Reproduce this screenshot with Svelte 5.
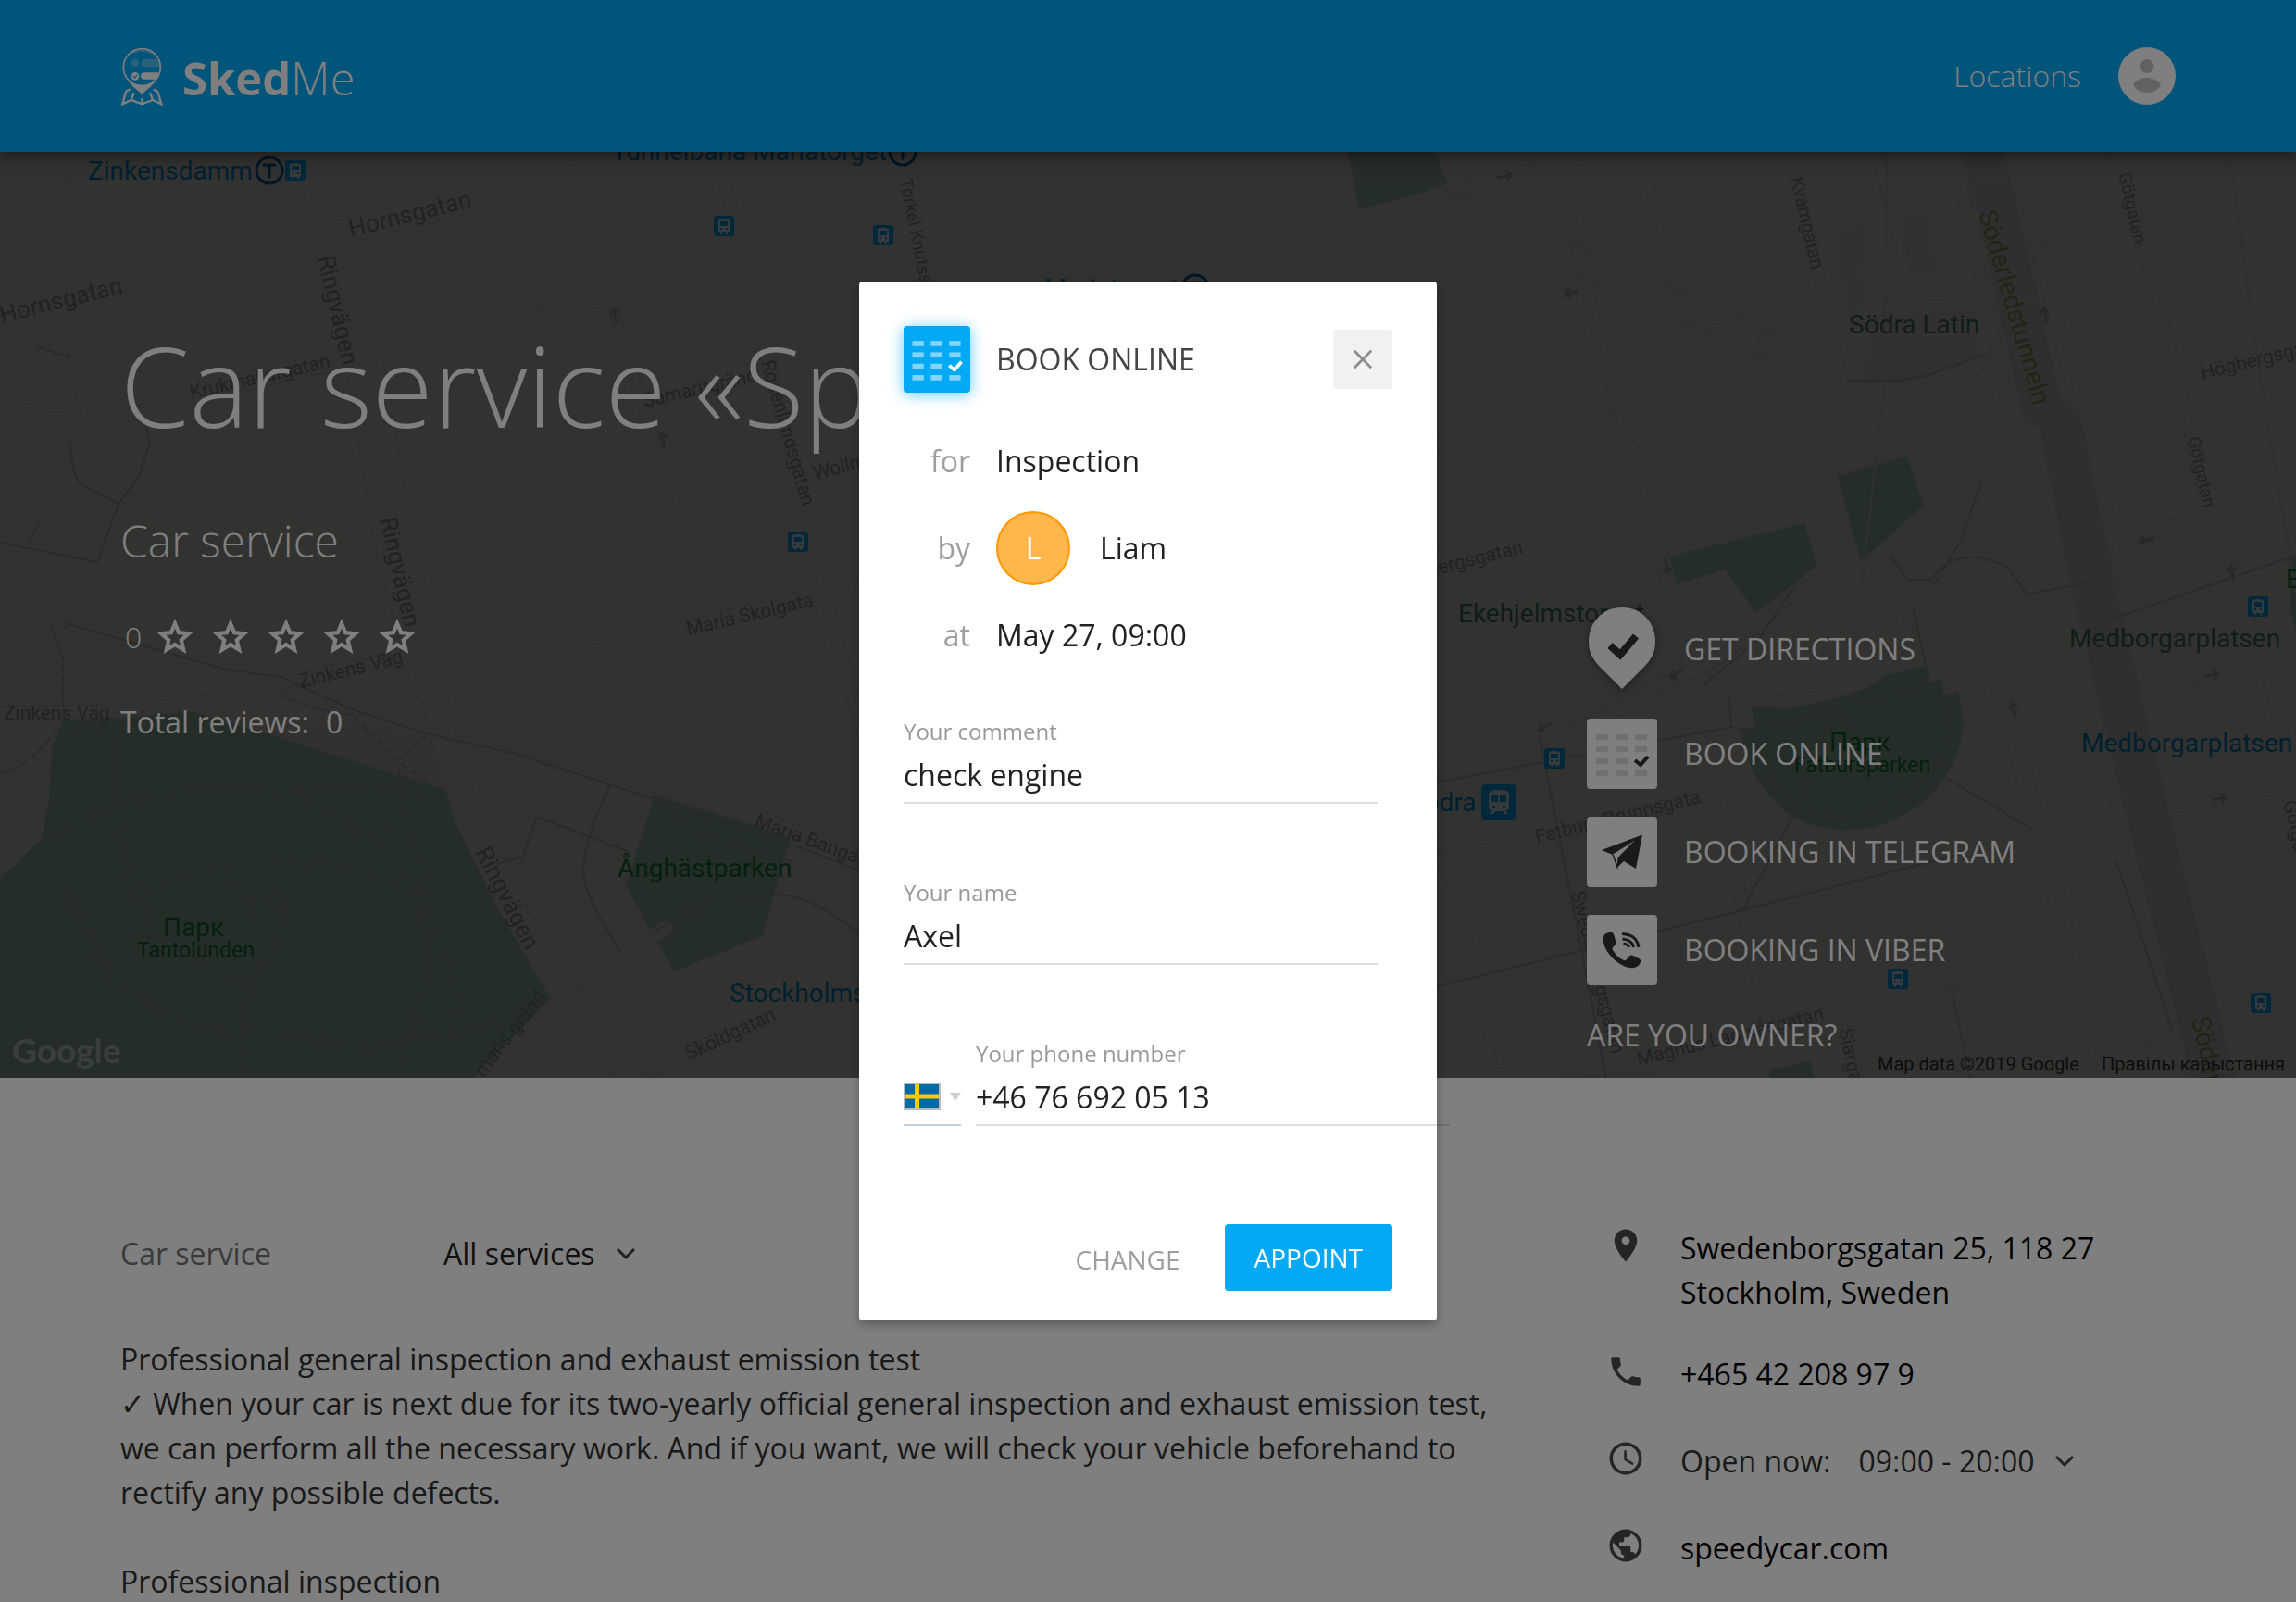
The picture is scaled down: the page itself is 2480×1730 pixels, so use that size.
<script>
  let comment = $state('check engine');
  let name = $state('Axel');
  let phone = $state('+46 76 692 05 13');
  let service = $state('All services');

  const cells = [0, 1, 2, 3].flatMap((r) => [0, 1, 2].map((c) => ({ r, c })));
  const ratings = [1, 2, 3, 4, 5];

  const roads = [
    { w: 24, d: 'M0 329L332 259L712 170L740 160' },
    { w: 6, d: 'M0 222L196 160' },
    { w: 12, d: 'M320 160L344 244' },
    { w: 26, d: 'M344 244L385 370L409 481' },
    { w: 40, d: 'M393 385L409 481L424 580L463 735' },
    { w: 26, d: 'M450 690L463 735L481 801L505 883L547 969L606 1070L683 1170' },
    { w: 12, d: 'M391 388L415 374L680 318L930 248' },
    { w: 12, d: 'M0 514L95 459L267 414L391 388' },
    { w: 10, d: 'M0 444L89 437' },
    { w: 10, d: 'M77 385L95 455' },
    { w: 11, d: 'M775 160L801 277L830 388L872 570L891 638L930 790' },
    { w: 9, d: 'M658 318L694 437L730 540' },
    { w: 10, d: 'M455 660L469 607L683 560L930 507' },
    { w: 14, d: 'M930 630L731 681L530 732Q499 744 499 770Q500 783 523 792L832 887L930 926' },
    { w: 13, d: 'M0 770L130 768L232 758L330 730L452 708' },
    { w: 8, d: 'M0 653L71 673' },
    { w: 11, d: 'M553 922L630 1058L713 1170' },
    { w: 13, d: 'M606 1070L719 1002' },
    { w: 11, d: 'M713 1147L880 1081L930 1060' },
    { w: 13, d: 'M1550 210L1680 178L1752 158' },
    { w: 11, d: 'M1680 178L1746 435L1787 561L1805 655Q1815 740 1882 752Q1930 768 2013 737Q2050 720 2063 670' },
    { w: 8, d: 'M1772 160L1823 360' },
    { w: 10, d: 'M1823 360L1894 350L1977 352M1906 364Q1905 400 1882 407L1829 427L1758 441' },
    { w: 9, d: 'M1932 160L1992 415' },
    { w: 10, d: 'M2027 160L2063 312Q2090 325 2125 312M2040 340Q2044 318 2063 312' },
    { w: 12, d: 'M2110 160L2173 455' },
    { w: 14, d: 'M2176 160L2244 439L2282 585L2282 600' },
    { w: 10, d: 'M2288 160L2321 285L2354 415L2386 561L2416 622L2451 737L2480 850' },
    { w: 12, d: 'M2321 289L2480 241' },
    { w: 17, d: 'M1550 605L1781 557L2013 494L2173 451L2351 407L2480 365' },
    { w: 12, d: 'M1550 482L1746 437' },
    { w: 10, d: 'M1550 348L1716 310' },
    { w: 15, d: 'M2282 585L2386 561' },
    { w: 12, d: 'M1550 829L1663 785L1847 718' },
    { w: 12, d: 'M1550 929L1657 907L1787 874L1835 859Q1850 860 1852 872L1876 951L1910 1110' },
    { w: 17, d: 'M2161 744L2179 811L2262 1125' },
    { w: 14, d: 'M2262 1135L2480 1081' },
    { w: 8, d: 'M1686 907L1740 1118' },
    { w: 15, d: 'M1550 1166L1780 1150L2013 1085L2232 1025' },
    { w: 20, d: 'M2290 866Q2297 880 2320 872L2480 844' },
    { w: 9, d: 'M2303 800L2303 748L2428 718' },
    { w: 9, d: 'M1562 935L1585 1015M1607 1105L1612 1164' }
  ];

  const paths = [
    'M71 673L244 723L303 731L380 766L463 793L553 813L707 863L850 910L930 941',
    'M40 374L62 382L76 384M76 478Q78 520 91 525L128 544L150 515L162 478L158 462M128 544L105 607L0 586',
    'M658 850Q620 930 634 960Q645 990 670 1027M537 933L565 925L580 882L680 920M930 1010Q870 960 830 967L770 968L700 1010',
    'M1550 1066L1882 983L2119 922M1882 983L1959 840M1663 795L1735 1164M2102 840L2196 896M1550 845L1870 785L1896 790M1870 785L1868 755',
    'M2042 600L2060 626L2087 626Q2100 600 2140 602L2167 611L2190 642L2268 626M2066 655L2084 737',
    'M1997 411L2050 411L2080 406L2140 384M2140 521L2118 584L2090 630M1960 600L1900 690L1840 740M2286 930L2346 1112M2280 669L2480 600'
  ];

  const dashes = [
    'M44 560L30 590M54 673L68 710L68 770M303 750Q330 765 380 772L430 822L480 860M430 822L460 795',
    'M0 834Q30 830 60 790L110 785M325 856L438 855L470 862M325 856L412 916L418 862M141 962L296 928L360 935L440 952',
    'M430 830L460 960L498 1070L475 1164M2108 1068L2128 1164'
  ];

  const parkPaths =
    'M53 903L140 865L220 850L325 856M122 790L130 900L142 962L180 1020L260 1060M440 950Q470 1000 460 1060L430 1160M70 960L120 1060L215 1112L300 1116L400 1132L540 1105M250 950L285 1000L300 960Q320 980 300 1010L268 1070L260 1160M707 863L760 900L854 930M765 970L740 1000M1890 790L1985 765L2096 735M1940 860L1985 765L2072 870M1900 800Q1900 850 1960 880Q2020 890 2060 860Q2110 820 2100 750';

  const parks = [
    '68,778 120,770 208,768 487,854 493,883 515,930 594,1079 511,1164 0,1164 0,949 45,906 53,863 56,809',
    '707,859 854,904 823,1011 728,1049 676,957',
    '1455,160 1548,160 1565,200 1468,226',
    '1985,514 2060,493 2078,546 2010,606',
    '1803,601 1949,565 1962,611 1897,662 1863,615 1811,631',
    '1892,763 1930,765 1965,757 2024,737 2036,729 2078,720 2084,737 2096,734 2100,751 2115,747 2121,781 2117,805 2107,829 2092,852 2072,870 2048,884 2024,894 1989,897 1953,890 1930,878 1912,859 1898,842 1888,822 1879,789 1896,784',
    '1912,1155 1955,1146 1959,1164 1912,1164',
    '2472,602 2480,600 2480,680 2474,660'
  ];

  const buses = [
    [308, 173], [771, 233], [943, 243], [851, 574], [2428, 644], [1668, 808], [2039, 1046], [2431, 1072]
  ];

  const arrows = [
    [664, 340, -100], [716, 475, -100], [1626, 190, -14], [1697, 316, 166], [1800, 612, 80], [1810, 728, 152],
    [1668, 785, 152], [2209, 340, -100], [2318, 583, 166], [2175, 766, -100], [2389, 729, -14], [2398, 862, -14], [2411, 618, -100]
  ];

  // kind, size, x, y, rotation, text
  const labels = [
    ['transit', 28, 95, 194, 0, 'Zinkensdamm'],
    ['transit', 28, 661, 173, 0, 'Tunnelbana Mariatorget'],
    ['transit', 28, 1128, 321, 0, 'Mariatorget'],
    ['transit', 28, 788, 1082, 0, 'Stockholms södra'],
    ['transit', 28, 1522, 876, 0, 'Södra'],
    ['transit', 28, 2248, 812, 0, 'Medborgarplatsen'],
    ['street', 26, 379, 256, -14, 'Hornsgatan'],
    ['street', 26, 2, 349, -14, 'Hornsgatan'],
    ['street', 26, 343, 278, 77, 'Ringvägen'],
    ['street', 26, 410, 561, 77, 'Ringvägen'],
    ['street', 26, 513, 920, 63, 'Ringvägen'],
    ['street', 21, 207, 431, -13, 'Krukmakargatan'],
    ['street', 21, 696, 440, -13, 'Samaritgränd'],
    ['street', 21, 822, 391, 74, 'Rosenlundsgatan'],
    ['street', 21, 880, 518, -14, 'Wollmar'],
    ['street', 19, 972, 194, 79, 'Torkel Knutssonsgatan'],
    ['street', 21, 743, 686, -13, 'Maria Skolgata'],
    ['street', 21, 325, 743, -14, 'Zinkens Väg'],
    ['street', 21, 4, 777, 0, 'Zinkens Väg'],
    ['street', 21, 814, 892, 20, 'Maria Bangata'],
    ['street', 21, 744, 1145, -25, 'Sköldgatan'],
    ['street', 21, 522, 1164, -52, 'mans gränd'],
    ['street', 20, 1934, 193, 77, 'Kvarngatan'],
    ['street', 19, 2288, 188, 77, 'Götgatan'],
    ['street', 19, 2363, 473, 77, 'Götgatan'],
    ['street', 21, 2466, 866, 77, 'Götgatan'],
    ['street', 21, 2379, 410, -14, 'Högbergsgatan'],
    ['street', 21, 1506, 632, -14, 'Högbergsgatan'],
    ['street', 21, 1660, 911, -14, 'Fatburs Brunnsgata'],
    ['street', 21, 1697, 964, 76, 'Swedenborgsgatan'],
    ['street', 21, 1770, 1151, -14, 'Magnus Ladulåsgatan'],
    ['street', 21, 1986, 1112, 78, 'Siargatan'],
    ['tunnel', 28, 2137, 230, 74, 'Söderledstunneln'],
    ['tunnel', 28, 2367, 1100, 77, 'Söderledstunneln'],
    ['place', 28, 1997, 360, 0, 'Södra Latin'],
    ['place', 28, 1575, 672, 0, 'Ekehjelmstorget'],
    ['place', 28, 2235, 699, 0, 'Medborgarplatsen'],
    ['park', 28, 176, 1011, 0, 'Парк'],
    ['park', 23, 148, 1034, 0, 'Tantolunden'],
    ['park', 28, 667, 947, 0, 'Ånghästparken'],
    ['park', 28, 1976, 811, 0, 'Парк'],
    ['park', 23, 1938, 834, 0, 'Fatbursparken'],
    ['park', 28, 2469, 635, 0, 'Eriksdal']
  ];
</script>

{#snippet calendar(tone)}
  <svg class={['calendar', tone]} viewBox="0 0 76 76" aria-hidden="true">
    {#each cells as { r, c }}
      {#if !(r === 2 && c === 2)}
        <rect class="cell" x={10 + c * 21} y={17 + r * 13} width="13" height="6" />
      {/if}
    {/each}
    <path class="tick" d="M52 45l6 5 8-9" />
  </svg>
{/snippet}

{#snippet chevron()}
  <svg class="chevron" viewBox="0 0 24 16" aria-hidden="true"><path d="M3 3l9 9 9-9" /></svg>
{/snippet}

<div class="page">
  <header class="topbar">
    <a class="brand" href="#home">
      <svg class="logo" viewBox="28 34 141 189" aria-hidden="true">
        <circle cx="98" cy="99" r="60" fill="none" stroke="#fff" stroke-width="5" />
        <path class="faint" d="M62 54q14-14 36-14t36 14q-8 3-18-2-8-4-18-2-8-6-18 2-9 5-18 2z" />
        <circle class="faint" cx="76" cy="85" r="13" />
        <path class="faint" d="M155 72h-47q-12 0-12 13t12 13h49q3-14-2-26z" />
        <circle cx="76" cy="128" r="13" fill="#fff" />
        <path d="M70 128l5 5 8-10" fill="none" stroke="#03a9f4" stroke-width="3.500" />
        <path d="M153 116h-48q-11 0-11 11t11 11h38q7-10 10-22z" fill="#fff" />
        <path d="M50 136q20 20 48 20t48-20q-6 14-20 26l-28 24-28-24q-14-12-20-26z" fill="#fff" />
        <path d="M60 172q-12-1-16 12l-9 34 28-13 35 13 35-13 28 13-10-34q-5-13-16-12M98 200v16M63 205l9-24M133 205l-9-24" fill="none" stroke="#fff" stroke-width="7" />
      </svg>
      <span class="wordmark"><b>Sked</b>Me</span>
    </a>
    <nav class="menu">
      <a href="#locations">Locations</a>
      <button class="account" aria-label="Account">
        <svg viewBox="0 0 62 62" aria-hidden="true">
          <circle cx="31" cy="20.500" r="7.500" />
          <path d="M16 41q4-8 15-8t15 8q-5 8-15 8t-15-8z" />
        </svg>
      </button>
    </nav>
  </header>

  <section class="hero">
    <svg class="map" viewBox="0 164 2480 1000" preserveAspectRatio="xMidYMid slice" aria-hidden="true">
      <rect class="ground" y="164" width="2480" height="1000" />
      <polygon class="clay" points="280,790 385,780 470,800 487,854" />
      <path class="clay" d="M1980 250l36-8 5 38-16 6 14 44-22 6zM2050 235l36-8 4 66-30 8zM2020 345l110-15 8 60-70 20-55 10z" />
      {#each parks as points}<polygon class="green" {points} />{/each}
      <path class="trail" d={parkPaths} />
      {#each roads as road}<path class="edge" d={road.d} style:stroke-width={road.w + 3} />{/each}
      {#each roads as road}<path class="road" d={road.d} style:stroke-width={road.w} />{/each}
      <path class="tunnelway" d="M2142 160L2205 439" style:stroke-width={44} />
      <path class="tunnelway" d="M2225 455L2262 640L2315 859L2392 1170" style:stroke-width={46} />
      <path class="rails" d="M2214 455L2245 640L2300 859M2232 455L2275 640L2325 859M2250 500L2290 640M2339 880L2402 1164M2320 885L2380 1164" />
      <path class="rails" d="M1550 905L1700 780L1860 700L1960 620M1550 925L1720 790L1870 710L1970 620M1550 200L1900 350L1980 400M1550 230L1880 375L1975 420M2038 164L2035 420L2010 640M2280 164L2190 290L2130 420M2408 164L2440 400L2480 640" />
      {#each paths as d}<path class="path" {d} />{/each}
      {#each dashes as d}<path class="path dashed" {d} />{/each}
      {#each arrows as [x, y, a]}
        <path class="arrow" transform="translate({x} {y}) rotate({a})" d="M-8 0H6M2-4l5 4-5 4" />
      {/each}
      {#each labels as [kind, size, x, y, angle, text]}
        <text class="label {kind}" font-size={size} transform="translate({x} {y}) rotate({angle})">{text}</text>
      {/each}
      {#each [[291, 184], [975, 164], [1291, 311]] as [x, y]}
        <g class="metro"><circle cx={x} cy={y} r="14" /><path d="M{x - 6} {y - 6}h12M{x} {y - 6}v13" /></g>
      {/each}
      {#each buses as [x, y]}
        <g transform="translate({x} {y})">
          <rect class="stop" width="22" height="22" rx="3" />
          <path class="bus" d="M5 5q0-2 6-2t6 2v13h-2v2h-2v-2H9v2H7v-2H5zM7 6v5h8V6zM7 13v2h2v-2zM13 13v2h2v-2z" />
        </g>
      {/each}
      <g transform="translate(1600 847)">
        <rect class="stop" width="38" height="38" rx="5" />
        <path class="bus" d="M8 10q0-4 11-4t11 4v14q0 4-4 4l3 4h-4l-2-3h-8l-2 3H9l3-4q-4 0-4-4zM11 12v7h7v-7zM20 12v7h7v-7zM12 23v3h3v-3zM23 23v3h3v-3z" />
      </g>
      <text class="label watermark" font-size="37" x="13" y="1148">Google</text>
      <text class="label credit" font-size="20" x="2028" y="1156">Map data ©2019 Google</text>
      <text class="label credit" font-size="20" x="2270" y="1156">Правілы карыстання</text>
    </svg>

    <div class="intro">
      <h1>Car service «Speedy»</h1>
      <p class="kind">Car service</p>
      <div class="rating">
        <span>0</span>
        {#each ratings as star}
          <svg viewBox="0 0 24 24" aria-label="Star {star}">
            <path d="M22 9.240l-7.190-.62L12 2 9.190 8.630 2 9.240l5.460 4.730L5.820 21 12 17.270 18.180 21l-1.630-7.030L22 9.240zM12 14.800l-3 1.800.8-3.400-2.650-2.300 3.500-.3L12 7.300l1.350 3.300 3.500.3-2.650 2.300.8 3.400L12 14.800z" />
          </svg>
        {/each}
      </div>
      <p class="reviews">Total reviews:<span>0</span></p>
    </div>

    <nav class="actions">
      <a class="action" href="#directions">
        <svg class="pin" viewBox="0 0 76 90" aria-hidden="true">
          <path d="M38 0C17 0 2 16 2 37c0 12 5 20 13 28l23 23 23-23c8-8 13-16 13-28C74 16 59 0 38 0z" fill="#fff" />
          <path d="M25 41l11 10 17-20" fill="none" stroke="#333" stroke-width="8" />
        </svg>
        GET DIRECTIONS
      </a>
      <a class="action" href="#book">{@render calendar('plain')}BOOK ONLINE</a>
      <a class="action" href="#telegram">
        <svg class="tile" viewBox="0 0 76 76" aria-hidden="true">
          <path d="M16 36L60 19.500 53 56 40 48 33 54.500 28 41z" fill="#333" />
          <path d="M28 40.500L53 25 34.500 44 33 53z" fill="#fff" />
          <path d="M28 41l5 13 1.500-10L55 23.500" fill="none" stroke="#333" stroke-width="1.500" />
        </svg>
        BOOKING IN TELEGRAM
      </a>
      <a class="action" href="#viber">
        <svg class="tile" viewBox="0 0 76 76" aria-hidden="true">
          <path d="M24 19C27 18 29 19 30 24C31 28 32 31 30 33C28 35 27 36 28 38C31 43 35 47 40 49C42 50 43 48 45 45C47 43 49 43 52 45C56 47 59 48 58 51C57 54 55 56 51 57C46 58 40 56 33 51C25 45 19 37 18 29C17 23 19 20 24 19Z" fill="#333" />
          <path d="M38 20.500Q54 21 56 35M38.500 26Q49 27 50.500 35M39.500 31Q45 32 45.500 35" fill="none" stroke="#333" stroke-width="3" />
        </svg>
        BOOKING IN VIBER
      </a>
      <a class="owner" href="#owner">ARE YOU OWNER?</a>
    </nav>
  </section>

  <main class="details">
    <div class="about">
      <div class="filter">
        <label for="service">Car service</label>
        <span class="picker">
          <select id="service" bind:value={service}>
            <option>All services</option>
          </select>
          {@render chevron()}
        </span>
      </div>
      <p>
        Professional general inspection and exhaust emission test<br />
        ✓ When your car is next due for its two-yearly official general inspection and exhaust emission test,
        we can perform all the necessary work. And if you want, we will check your vehicle beforehand to
        rectify any possible defects.
      </p>
      <p>Professional inspection</p>
    </div>

    <address class="contacts">
      <div class="contact place">
        <svg viewBox="0 0 24 24" aria-hidden="true"><path d="M12 2C8.130 2 5 5.130 5 9c0 5.250 7 13 7 13s7-7.750 7-13c0-3.870-3.130-7-7-7zm0 9.500c-1.380 0-2.500-1.120-2.500-2.500s1.120-2.500 2.500-2.500 2.500 1.120 2.500 2.500-1.120 2.500-2.500 2.500z" /></svg>
        <a href="#map">Swedenborgsgatan 25, 118 27<br />Stockholm, Sweden</a>
      </div>
      <div class="contact">
        <svg viewBox="0 0 24 24" aria-hidden="true"><path d="M6.620 10.790c1.440 2.830 3.760 5.140 6.590 6.590l2.200-2.200c.27-.27.67-.36 1.020-.24 1.120.37 2.330.57 3.570.57.550 0 1 .45 1 1V20c0 .55-.45 1-1 1-9.390 0-17-7.610-17-17 0-.55.45-1 1-1h3.500c.55 0 1 .45 1 1 0 1.250.2 2.450.57 3.570.11.35.03.74-.25 1.020l-2.200 2.200z" /></svg>
        <a href="#call">+465 42 208 97 9</a>
      </div>
      <div class="contact">
        <svg viewBox="0 0 24 24" aria-hidden="true"><path d="M11.990 2C6.470 2 2 6.480 2 12s4.470 10 9.990 10C17.520 22 22 17.520 22 12S17.520 2 11.990 2zM12 20c-4.420 0-8-3.580-8-8s3.580-8 8-8 8 3.580 8 8-3.580 8-8 8zM12.500 7H11v6l5.250 3.150.75-1.230-4.500-2.670z" /></svg>
        <button class="hours"><span>Open now:</span><span>09:00 - 20:00</span>{@render chevron()}</button>
      </div>
      <div class="contact">
        <svg viewBox="0 0 24 24" aria-hidden="true"><path d="M12 2C6.480 2 2 6.480 2 12s4.480 10 10 10 10-4.480 10-10S17.520 2 12 2zm-1 17.930c-3.950-.49-7-3.850-7-7.930 0-.62.080-1.210.21-1.790L9 15v1c0 1.100.9 2 2 2v1.930zm6.900-2.540c-.26-.81-1-1.390-1.900-1.390h-1v-3c0-.55-.45-1-1-1H8v-2h2c.55 0 1-.45 1-1V7h2c1.100 0 2-.9 2-2v-.41c2.930 1.190 5 4.060 5 7.410 0 2.080-.8 3.970-2.100 5.390z" /></svg>
        <a href="#site">speedycar.com</a>
      </div>
    </address>
  </main>
</div>

<div class="backdrop">
  <form class="dialog" role="dialog" aria-labelledby="dialog-title" onsubmit={(e) => e.preventDefault()}>
    <div class="heading">
      {@render calendar('bright')}
      <h2 id="dialog-title">BOOK ONLINE</h2>
      <button type="button" class="close" aria-label="Close">
        <svg viewBox="0 0 24 24" aria-hidden="true"><path d="M2 2l20 20M22 2L2 22" /></svg>
      </button>
    </div>

    <dl class="summary">
      <div><dt>for</dt><dd>Inspection</dd></div>
      <div><dt>by</dt><dd><span class="avatar">L</span>Liam</dd></div>
      <div><dt>at</dt><dd>May 27, 09:00</dd></div>
    </dl>

    <div class="fields">
      <div class="field">
        <label for="comment">Your comment</label>
        <input id="comment" type="text" bind:value={comment} />
      </div>
      <div class="field">
        <label for="name">Your name</label>
        <input id="name" type="text" bind:value={name} />
      </div>
      <div class="phone">
        <button type="button" class="country" aria-label="Country: Sweden">
          <svg class="flag" viewBox="0 0 40 30" aria-hidden="true">
            <rect width="40" height="30" fill="#bbb" />
            <rect x="2" y="2" width="36" height="26" fill="#006aa7" />
            <path d="M2 15h36M14.500 2v26" stroke="#fecc00" stroke-width="5" />
          </svg>
          <svg class="caret" viewBox="0 0 12 9" aria-hidden="true"><path d="M0 0h12L6 9z" fill="#ccced4" /></svg>
        </button>
        <div class="field">
          <label for="phone">Your phone number</label>
          <input id="phone" type="tel" bind:value={phone} />
        </div>
      </div>
    </div>

    <div class="buttons">
      <button type="button" class="change">CHANGE</button>
      <button type="submit" class="appoint">APPOINT</button>
    </div>
  </form>
</div>

<style>
  :global(body) {
    background: #fff;
    font-family: 'Open Sans', 'DejaVu Sans', sans-serif;
    font-size: 32px;
    line-height: 48px;
    color: #333;
  }
  h1, h2, p, dl, dd { margin: 0; font-weight: 400; }
  a { color: inherit; text-decoration: none; }
  button, input, select { font: inherit; color: inherit; border: 0; padding: 0; margin: 0; background: none; }
  button { cursor: pointer; }
  svg { display: block; flex: none; }

  .page { max-height: 100vh; overflow: hidden; }

  .topbar {
    position: relative;
    z-index: 1;
    display: flex;
    align-items: center;
    justify-content: space-between;
    padding: 50px 130px;
    background: #03a9f4;
    box-shadow: 0 4px 16px rgba(0, 0, 0, 0.5);
    color: #fff;
  }
  .brand { display: flex; align-items: center; gap: 20px; }
  .logo { width: 47px; height: 63px; }
  .faint { fill: #fff; opacity: 0.3; }
  .wordmark { padding-top: 4px; font-size: 49px; line-height: 60px; font-weight: 300; }
  .wordmark b { font-weight: 700; }
  .menu { display: flex; align-items: center; gap: 40px; font-weight: 300; }
  .account { width: 62px; height: 62px; border-radius: 50%; background: #fff; overflow: hidden; }
  .account svg { width: 62px; height: 62px; fill: #c4c4c4; }

  .hero {
    position: relative;
    display: flex;
    justify-content: space-between;
    padding: 0 130px 22px;
    color: #fff;
    overflow: hidden;
  }
  .map { position: absolute; inset: 0; width: 100%; height: 100%; }
  .ground { fill: #656460; }
  .clay { fill: #67635f; }
  .green { fill: #4b5a52; }
  .map path { fill: none; stroke-linejoin: round; stroke-linecap: round; }
  .map path.clay { fill: #67635f; }
  .edge { stroke: #5e5f61; }
  .road { stroke: #646466; }
  .tunnelway { stroke: #5e5e60; }
  .rails { stroke: #5f5f60; stroke-width: 2; }
  .path { stroke: #545453; stroke-width: 2; }
  .trail { stroke: #54564f; stroke-width: 2; }
  .dashed { stroke-dasharray: 7 5; }
  .arrow { stroke: #505050; stroke-width: 3; }
  .label { font-family: Roboto, sans-serif; }
  .street { fill: #454545; }
  .transit { fill: #00405f; }
  .tunnel { fill: #4a4728; }
  .place { fill: #1f3a35; }
  .park { fill: #06401f; }
  .watermark { font-family: Lato, sans-serif; font-weight: 700; fill: #757c79; }
  .credit { fill: #1a1a1a; }
  .metro circle, .metro path { fill: none; stroke: #002b4a; stroke-width: 3; }
  .stop { fill: #005074; }
  .map path.bus { fill: #6f7578; fill-rule: evenodd; }

  .intro, .actions { position: relative; }
  .intro { padding-top: 180px; width: 800px; white-space: nowrap; }
  h1 { font-size: 120px; line-height: 144px; font-weight: 300; }
  .kind { margin-top: 64px; font-size: 48px; line-height: 64px; font-weight: 300; }
  .rating { display: flex; align-items: center; gap: 12px; margin-top: 48px; padding-left: 5px; font-weight: 300; }
  .rating svg { width: 48px; height: 48px; fill: #fff; }
  .reviews { margin-top: 44px; }
  .reviews span { margin-left: 18px; }

  .actions { display: flex; flex-direction: column; gap: 30px; width: 636px; padding-top: 492px; }
  .action { display: flex; align-items: center; gap: 29px; }
  .pin { width: 76px; height: 90px; filter: drop-shadow(0 2px 4px rgba(0, 0, 0, 0.4)); }
  .tile { width: 76px; height: 76px; border-radius: 4px; background: #fff; }
  .calendar { width: 76px; height: 76px; border-radius: 4px; }
  .calendar.plain { background: #fff; }
  .calendar .cell { fill: #dedede; }
  .calendar .tick { fill: none; stroke: #333; stroke-width: 4; }
  .calendar.bright { width: 72px; height: 72px; background: #03a9f4; box-shadow: 0 2px 16px rgba(3, 169, 244, 0.6); }
  .calendar.bright .cell { fill: #81d4fa; }
  .calendar.bright .tick { stroke: #fff; }

  .details { display: flex; justify-content: space-between; padding: 160px 130px 0; }
  .about { width: 1500px; padding-top: 6px; }
  .filter { display: flex; margin-bottom: 66px; }
  .filter label { width: 349px; color: #757575; }
  .picker { display: flex; align-items: center; gap: 21px; color: #222; }
  .picker select { appearance: none; height: 48px; }
  .chevron { width: 24px; height: 16px; fill: none; stroke: #444; stroke-width: 3; }
  .about p { margin-bottom: 48px; }

  .contacts { width: 615px; font-style: normal; }
  .contact { display: flex; gap: 38px; margin-bottom: 46px; color: #000; }
  .contact.place { margin-bottom: 40px; }
  .contact > svg { width: 42px; height: 42px; fill: #4a4a4a; }
  .hours { display: flex; align-items: center; color: #333; }
  .hours span { margin-right: 20px; }
  .hours span:first-child { margin-right: 30px; }

  .backdrop {
    position: fixed;
    inset: 0;
    z-index: 2;
    display: flex;
    align-items: center;
    justify-content: center;
    background: rgba(0, 0, 0, 0.5);
  }
  .dialog {
    box-sizing: border-box;
    width: 100%;
    max-width: 624px;
    padding: 48px 48px 32px;
    border-radius: 4px;
    background: #fff;
    box-shadow: 0 4px 12px rgba(0, 0, 0, 0.3);
    color: #222;
  }
  .heading { display: flex; align-items: center; gap: 28px; }
  .heading h2 { flex: 1; font-size: 32px; color: #444; }
  .close { display: grid; place-items: center; width: 64px; height: 64px; border-radius: 4px; background: #f1f1f1; }
  .close svg { width: 22px; height: 22px; fill: none; stroke: #8c8c8c; stroke-width: 3; }

  .summary { display: grid; gap: 14px; margin-top: 34px; }
  .summary div { display: flex; align-items: center; gap: 28px; min-height: 80px; }
  .summary dt { width: 72px; text-align: right; color: #9e9e9e; }
  .summary dd { display: flex; align-items: center; gap: 32px; }
  .avatar {
    box-sizing: border-box;
    display: grid;
    place-items: center;
    width: 80px;
    height: 80px;
    border: 2px solid #ff9800;
    border-radius: 50%;
    background: #ffb74d;
    color: #fff;
  }

  .fields { display: grid; gap: 80px; margin-top: 48px; }
  .field label { display: block; font-size: 24px; line-height: 32px; color: #999; }
  .field input {
    box-sizing: border-box;
    display: block;
    width: 512px;
    height: 62px;
    border-bottom: 2px solid rgba(0, 0, 0, 0.13);
    outline: 0;
  }
  .phone { display: flex; align-items: flex-end; gap: 16px; }
  .country {
    box-sizing: border-box;
    display: flex;
    align-items: center;
    gap: 10px;
    width: 62px;
    height: 62px;
    border-bottom: 2px solid #c0d2e0;
  }
  .flag { width: 40px; height: 30px; }
  .caret { width: 12px; height: 9px; }

  .buttons { display: flex; align-items: center; justify-content: flex-end; gap: 48px; margin-top: 106px; font-size: 28px; }
  .change { padding-top: 4px; color: #9e9e9e; }
  .appoint { height: 72px; padding: 0 32px; border-radius: 4px; background: #03a9f4; color: #fff; }
</style>
